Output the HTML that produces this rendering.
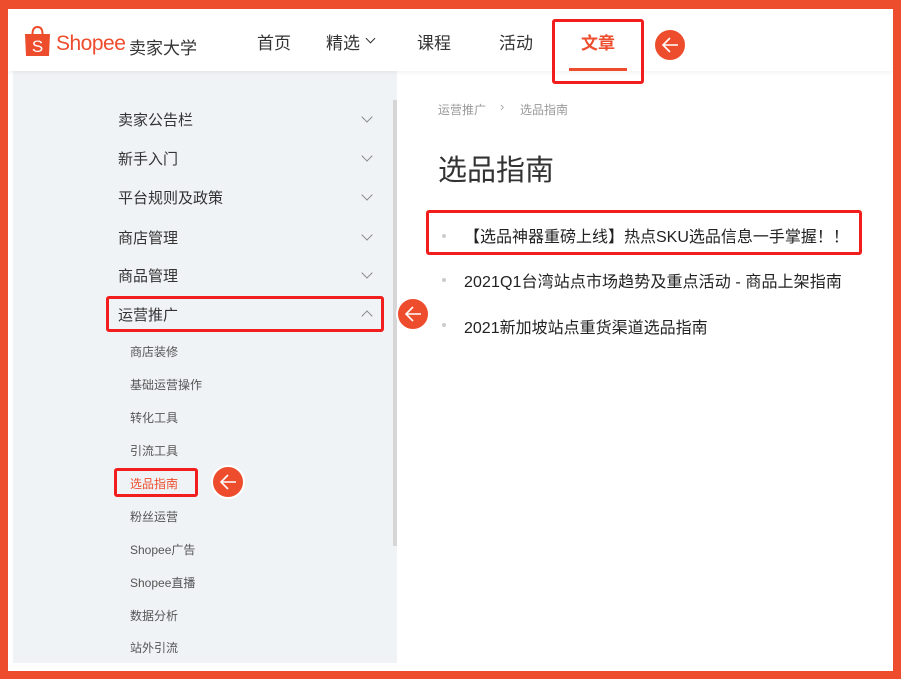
<!DOCTYPE html>
<html><head><meta charset="utf-8"><style>
*{margin:0;padding:0;box-sizing:border-box}
body{width:901px;height:680px;position:relative;overflow:hidden;background:#fff;font-family:"Liberation Sans","Noto Sans CJK SC",sans-serif;color:#333}
.a{position:absolute;white-space:nowrap}
.frame{position:absolute;left:0;top:0;width:901px;height:679px;border:8px solid #ee4d2d;border-top-width:9px}
.side{position:absolute;left:13px;top:71px;width:384px;height:592px;background:#f0f3f6}
.hdr{position:absolute;left:8px;top:9px;width:884px;height:62px;background:#fff;box-shadow:0 2px 4px rgba(0,0,0,.05)}
.nav{font-size:17px;color:#333;top:29px}
.m{font-size:15px;color:#333;left:118px}
.s{font-size:12px;color:#555;left:130px}
.chev{position:absolute;left:363px;width:8px;height:8px;border-right:1.3px solid #888;border-bottom:1.3px solid #888;transform:rotate(45deg)}
.red{position:absolute;border:3px solid #f21d1d;border-radius:3px}
.arr{position:absolute;width:34px;height:34px;border-radius:50%;background:#ee4d2d;border:2px solid #fff}
.arr svg{position:absolute;left:5px;top:5px}
.li{font-size:16px;color:#222;left:464px}
.dot{position:absolute;left:442px;width:4px;height:4px;border-radius:50%;background:#ccc}
</style></head><body>
<div class="side"></div>
<div style="position:absolute;left:393px;top:100px;width:4px;height:446px;background:#d6d6d6"></div>
<div class="hdr"></div>
<svg class="a" style="left:24px;top:25px" width="27" height="33" viewBox="0 0 27 33"><path d="M8.5 9 Q8.5 2 13.5 2 Q18.5 2 18.5 9" fill="none" stroke="#ee4d2d" stroke-width="2"/><path d="M1 9 H26 L25 31 H2 Z" fill="#ee4d2d"/><text x="13.5" y="27" font-size="17" fill="#fff" text-anchor="middle" font-family="Liberation Sans">S</text></svg>
<div class="a" style="left:56px;top:32px;font-size:21px;color:#ee4d2d;letter-spacing:-0.5px">Shopee</div>
<div class="a" style="left:129px;top:34px;font-size:17px;color:#333">卖家大学</div>
<div class="a nav" style="left:257px">首页</div>
<div class="a nav" style="left:326px">精选</div>
<div class="chev" style="left:367px;top:35px;width:7px;height:7px;border-color:#333"></div>
<div class="a nav" style="left:417px">课程</div>
<div class="a nav" style="left:499px">活动</div>
<div class="a nav" style="left:581px;color:#ee4d2d;font-weight:bold">文章</div>
<div class="a" style="left:569px;top:68px;width:58px;height:3px;background:#ee4d2d"></div>
<div class="red" style="left:552px;top:19px;width:92px;height:65px"></div>
<div class="arr" style="left:653px;top:28px"><svg width="20" height="20" viewBox="0 0 20 20"><path d="M18 10H3M10 3L3 10L10 17" fill="none" stroke="#fff" stroke-width="1.6"/></svg></div>
<div class="frame"></div>

<div class="a m" style="top:109px">卖家公告栏</div><div class="chev" style="top:113px"></div>
<div class="a m" style="top:148px">新手入门</div><div class="chev" style="top:152px"></div>
<div class="a m" style="top:187px">平台规则及政策</div><div class="chev" style="top:191px"></div>
<div class="a m" style="top:227px">商店管理</div><div class="chev" style="top:231px"></div>
<div class="a m" style="top:265px">商品管理</div><div class="chev" style="top:269px"></div>
<div class="a m" style="top:304px">运营推广</div><div class="chev" style="top:312px;transform:rotate(-135deg)"></div>
<div class="red" style="left:106px;top:296px;width:278px;height:36px"></div>
<div class="arr" style="left:396px;top:297px"><svg width="20" height="20" viewBox="0 0 20 20"><path d="M18 10H3M10 3L3 10L10 17" fill="none" stroke="#fff" stroke-width="1.6"/></svg></div>
<div class="a s" style="top:343px">商店装修</div>
<div class="a s" style="top:376px">基础运营操作</div>
<div class="a s" style="top:409px">转化工具</div>
<div class="a s" style="top:442px">引流工具</div>
<div class="a s" style="top:475px;color:#ee4d2d">选品指南</div>
<div class="red" style="left:114px;top:468px;width:84px;height:29px"></div>
<div class="arr" style="left:211px;top:465px"><svg width="20" height="20" viewBox="0 0 20 20"><path d="M18 10H3M10 3L3 10L10 17" fill="none" stroke="#fff" stroke-width="1.6"/></svg></div>
<div class="a s" style="top:508px">粉丝运营</div>
<div class="a s" style="top:541px">Shopee广告</div>
<div class="a s" style="top:574px">Shopee直播</div>
<div class="a s" style="top:607px">数据分析</div>
<div class="a s" style="top:639px">站外引流</div>

<div class="a" style="left:438px;top:101px;font-size:12px;color:#999">运营推广</div>
<div class="a" style="left:500px;top:99px;font-size:13px;color:#aaa">›</div>
<div class="a" style="left:520px;top:101px;font-size:12px;color:#999">选品指南</div>
<div class="a" style="left:438px;top:147px;font-size:29px;color:#333">选品指南</div>
<div class="dot" style="top:234px"></div>
<div class="a li" style="left:464px;top:223px">【选品神器重磅上线】热点SKU选品信息一手掌握！！</div>
<div class="red" style="left:426px;top:210px;width:436px;height:45px"></div>
<div class="dot" style="top:278px"></div>
<div class="a li" style="top:268px;letter-spacing:0.1px">2021Q1台湾站点市场趋势及重点活动 - 商品上架指南</div>
<div class="dot" style="top:323px"></div>
<div class="a li" style="top:314px">2021新加坡站点重货渠道选品指南</div>
</body></html>
